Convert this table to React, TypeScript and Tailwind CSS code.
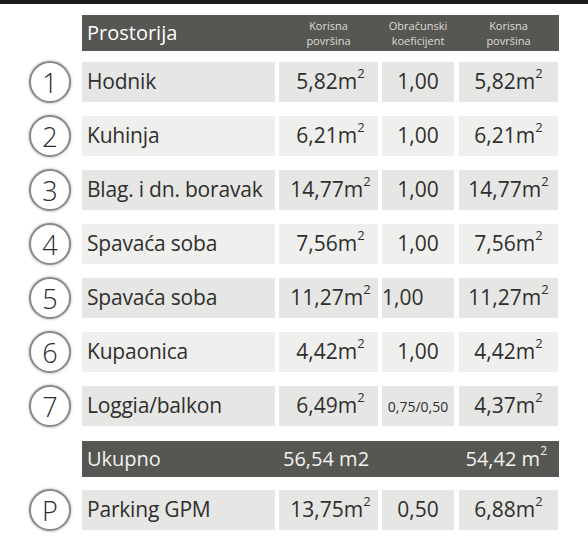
const rows = [
  { n: '1', name: 'Hodnik', a: '5,82', k: '1,00', b: '5,82' },
  { n: '2', name: 'Kuhinja', a: '6,21', k: '1,00', b: '6,21' },
  { n: '3', name: 'Blag. i dn. boravak', a: '14,77', k: '1,00', b: '14,77' },
  { n: '4', name: 'Spavaća soba', a: '7,56', k: '1,00', b: '7,56' },
  { n: '5', name: 'Spavaća soba', a: '11,27', k: '1,00', b: '11,27', left: true },
  { n: '6', name: 'Kupaonica', a: '4,42', k: '1,00', b: '4,42' },
  { n: '7', name: 'Loggia/balkon', a: '6,49', k: '0,75/0,50', b: '4,37', small: true },
]

function M2({ v }: { v: string }) {
  return (
    <span>
      {v}m<sup className="text-[13px] relative -top-[3px] align-super leading-none">2</sup>
    </span>
  )
}

function Circle({ c }: { c: string }) {
  return (
    <div className="w-[82px] shrink-0 flex justify-start pl-[29px]">
      <div className="w-[42px] h-[42px] rounded-full border-2 border-[#8a8a88] bg-white shadow-[0_0_3px_rgba(0,0,0,0.35)] flex items-center justify-center text-[27px] leading-none text-[#2a2a2a] font-light">
        {c}
      </div>
    </div>
  )
}

function Row({ r, i }: { r: any; i: number }) {
  const bg = i % 2 === 0 ? 'bg-[#e6e6e4]' : 'bg-[#efefed]'
  return (
    <div className="flex items-center h-[40px]">
      <Circle c={r.n} />
      <div className={`w-[193px] h-full ${bg} flex items-center pl-[5px] whitespace-nowrap tracking-[-0.2px]`}>{r.name}</div>
      <div className={`ml-[4px] w-[99px] h-full ${bg} flex items-center justify-center pl-[4px] whitespace-nowrap`}>
        <M2 v={r.a} />
      </div>
      <div
        className={`ml-[4px] w-[72px] h-full ${bg} flex items-center whitespace-nowrap ${r.left ? 'justify-start -ml-[3px] pl-0' : 'justify-center'} ${r.small ? 'text-[14px]' : ''}`}
      >
        {r.k}
      </div>
      <div className={`ml-[5px] w-[99px] h-full ${bg} flex items-center justify-center whitespace-nowrap`}>
        <M2 v={r.b} />
      </div>
    </div>
  )
}

export default function App() {
  return (
    <div className="w-[588px] h-[539px] bg-white text-[#2f2f2d] text-[21px] overflow-hidden" style={{ fontFamily: '"Open Sans", "Noto Sans", sans-serif' }}>
      <div className="h-[4px] bg-[#1b1b1b]" />
      <div className="flex flex-col pt-[11px]">
        <div className="flex h-[36px]">
          <div className="w-[82px] shrink-0" />
          <div className="w-[477px] bg-[#565652] flex items-center text-white">
            <div className="w-[197px] pl-[5px] text-[20px]">Prostorija</div>
            <div className="w-[99px] text-center text-[11px] leading-[15px] text-[#dedcd8]">Korisna<br />površina</div>
            <div className="ml-[4px] w-[72px] text-center text-[11px] leading-[15px] text-[#dedcd8]">Obračunski<br />koeficijent</div>
            <div className="ml-[5px] w-[99px] text-center text-[11px] leading-[15px] text-[#dedcd8]">Korisna<br />površina</div>
          </div>
        </div>
        <div className="flex flex-col gap-[14px] mt-[11px]">
          {rows.map((r, i) => (
            <Row key={i} r={r} i={i} />
          ))}
        </div>
        <div className="flex h-[36px] mt-[15px]">
          <div className="w-[82px] shrink-0" />
          <div className="w-[477px] bg-[#565652] flex items-center text-[#f2f2f0] text-[20px]">
            <div className="w-[201px] pl-[5px]">Ukupno</div>
            <div className="w-[180px]">56,54 m2</div>
            <div className="flex-1 text-right pr-[12px] whitespace-nowrap">
              54,42 m<sup className="text-[12px] relative -top-[3px] align-super leading-none">2</sup>
            </div>
          </div>
        </div>
        <div className="mt-[13px]">
          <Row r={{ n: 'P', name: 'Parking GPM', a: '13,75', k: '0,50', b: '6,88' }} i={0} />
        </div>
      </div>
    </div>
  )
}
